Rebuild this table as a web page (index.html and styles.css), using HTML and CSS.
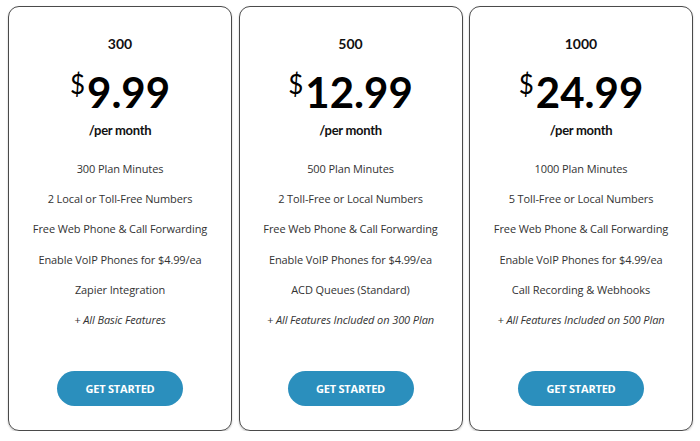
FILE: index.html
```html
<!DOCTYPE html>
<html>
<head>
<meta charset="utf-8">
<link rel="stylesheet" href="styles.css">
</head>
<body>
<div class="plans">
  <div class="card">
    <div class="name">300</div>
    <div class="price"><span class="cur">$</span>9.99</div>
    <div class="per">/per month</div>
    <ul class="features">
      <li>300 Plan Minutes</li>
      <li>2 Local or Toll-Free Numbers</li>
      <li>Free Web Phone &amp; Call Forwarding</li>
      <li>Enable VoIP Phones for $4.99/ea</li>
      <li>Zapier Integration</li>
      <li class="more">+ All Basic Features</li>
    </ul>
    <a class="btn">GET STARTED</a>
  </div>
  <div class="card">
    <div class="name">500</div>
    <div class="price"><span class="cur">$</span>12.99</div>
    <div class="per">/per month</div>
    <ul class="features">
      <li>500 Plan Minutes</li>
      <li>2 Toll-Free or Local Numbers</li>
      <li>Free Web Phone &amp; Call Forwarding</li>
      <li>Enable VoIP Phones for $4.99/ea</li>
      <li>ACD Queues (Standard)</li>
      <li class="more">+ All Features Included on 300 Plan</li>
    </ul>
    <a class="btn">GET STARTED</a>
  </div>
  <div class="card">
    <div class="name">1000</div>
    <div class="price"><span class="cur">$</span>24.99</div>
    <div class="per">/per month</div>
    <ul class="features">
      <li>1000 Plan Minutes</li>
      <li>5 Toll-Free or Local Numbers</li>
      <li>Free Web Phone &amp; Call Forwarding</li>
      <li>Enable VoIP Phones for $4.99/ea</li>
      <li>Call Recording &amp; Webhooks</li>
      <li class="more">+ All Features Included on 500 Plan</li>
    </ul>
    <a class="btn">GET STARTED</a>
  </div>
</div>
</body>
</html>
```
FILE: styles.css
```css
html, body {
  margin: 0;
  padding: 0;
  background: #ffffff;
}
body {
  font-family: "Open Sans", sans-serif;
  color: #222;
}
.plans {
  display: grid;
  grid-template-columns: repeat(3, 224px);
  column-gap: 6.5px;
  padding: 6px 0 0 8px;
}
.card {
  height: 425px;
  box-sizing: border-box;
  border: 1.5px solid #4a4a4a;
  border-radius: 11px;
  box-shadow: 0 1px 2px rgba(0,0,0,0.25);
  display: flex;
  flex-direction: column;
  align-items: center;
  text-align: center;
}
.name {
  font-family: Lato, sans-serif;
  font-weight: 700;
  font-size: 14px;
  line-height: 16px;
  margin-top: 29px;
  color: #111;
}
.price {
  font-family: Lato, sans-serif;
  font-weight: 700;
  font-size: 42px;
  line-height: 42px;
  margin-top: 19px;
  color: #000;
}
.cur {
  font-size: 26px;
  font-weight: 400;
  line-height: 0;
  vertical-align: 14px;
  margin-right: 2px;
}
.per {
  font-family: Lato, sans-serif;
  font-weight: 700;
  font-size: 13px;
  line-height: 16px;
  letter-spacing: -0.3px;
  margin-top: 9px;
  color: #111;
}
.features {
  list-style: none;
  margin: 16px 0 0 0;
  padding: 0;
  font-size: 11px;
  letter-spacing: -0.1px;
  color: #333;
}
.features li {
  line-height: 30.2px;
  height: 30.2px;
}
.features .more {
  font-style: italic;
}
.btn {
  margin-top: 36px;
  width: 126px;
  height: 35px;
  border-radius: 18px;
  background: #2b8fbd;
  color: #fff;
  font-weight: 700;
  font-size: 11px;
  line-height: 35px;
  letter-spacing: -0.2px;
}
```
